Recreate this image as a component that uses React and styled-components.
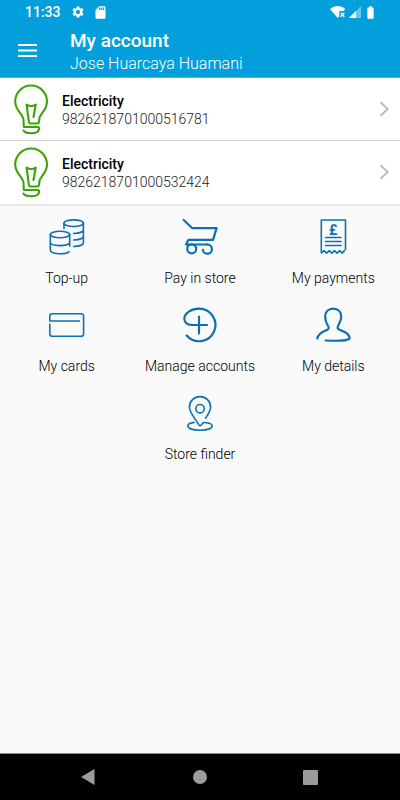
import React from "react";
import styled, { createGlobalStyle } from "styled-components";
import { MdSettings, MdSdCard, MdBatteryFull } from "react-icons/md";

const GlobalStyle = createGlobalStyle`
  * { box-sizing: border-box; }
  body { margin: 0; background: #fafafa; font-family: Roboto, "Liberation Sans", sans-serif; }
  button { font: inherit; border: 0; margin: 0; padding: 0; background: none; cursor: pointer; }
  svg { display: block; flex: none; }
`;

const Screen = styled.div`
  min-height: 100vh;
  display: flex;
  flex-direction: column;
  background: #fafafa;
`;

const Header = styled.header`
  background: #029fdc;
  color: #fff;
  border-bottom: 1px solid #55b5e0;
`;

const StatusBar = styled.div`
  height: 24px;
  padding: 0 22px 0 25px;
  display: flex;
  align-items: center;
  justify-content: space-between;
`;

const StatusGroup = styled.div`
  display: flex;
  align-items: center;
  gap: ${(p) => p.$gap}px;
`;

const Clock = styled.time`
  font-size: 14px;
  font-weight: 500;
  line-height: 24px;
  margin-right: 2px;
`;

const AppBar = styled.div`
  height: 53px;
  padding-left: 15px;
  display: flex;
  align-items: center;
  gap: 31px;
`;

const MenuButton = styled.button`
  width: 24px;
  height: 24px;
  color: #fff;
`;

const Heading = styled.div`
  padding-top: 3px;
`;

const Title = styled.h1`
  margin: 0;
  font-size: 19px;
  line-height: 24px;
  font-weight: 500;
`;

const Subtitle = styled.p`
  margin: 0;
  font-size: 16px;
  line-height: 22px;
  font-weight: 300;
`;

const AccountList = styled.ul`
  list-style: none;
  margin: 0;
  padding: 0 0 1px;
  background: #fff;
  border-bottom: 2px solid #e7e7e7;
`;

const AccountItem = styled.li`
  & + & { border-top: 1px solid #cfcfcf; }
`;

const AccountButton = styled.button`
  width: 100%;
  height: 62px;
  padding: 0 8px 0 13px;
  display: flex;
  align-items: center;
  gap: 13px;
  text-align: left;
`;

const AccountText = styled.span`
  flex: 1;
  display: flex;
  flex-direction: column;
  padding-top: 2px;
`;

const AccountName = styled.span`
  font-size: 14px;
  line-height: 18px;
  font-weight: 500;
  color: #000;
`;

const AccountNumber = styled.span`
  font-size: 14px;
  line-height: 18px;
  font-weight: 300;
  color: #222;
`;

const Actions = styled.main`
  flex: 1;
  display: flex;
  flex-wrap: wrap;
  justify-content: center;
  align-content: flex-start;
`;

const Tile = styled.button`
  width: 33.333%;
  height: 88px;
  display: flex;
  flex-direction: column;
  align-items: center;
  gap: 11px;
  padding-top: 11px;
`;

const TileLabel = styled.span`
  font-size: 14px;
  line-height: 20px;
  font-weight: 300;
  color: #000;
`;

const TileIcon = styled.svg.attrs({
  width: 40,
  height: 40,
  viewBox: "0 0 40 40",
  fill: "none",
  stroke: "#0d70b3",
  strokeLinecap: "round",
  strokeLinejoin: "round",
  "aria-hidden": true,
})`
  stroke-width: ${(p) => (p.$bold ? 2.2 : 1.6)};
`;

const NavBar = styled.nav`
  height: 47px;
  background: #000;
  border-top: 1px solid #888;
  display: flex;
  align-items: center;
  justify-content: space-between;
  padding: 0 77px 0 76px;
`;

const NavButton = styled.button`
  width: 24px;
  height: 24px;
`;

const WifiOff = () => (
  <svg width="17" height="14" viewBox="0 0 17 14" aria-hidden="true">
    <path d="M0 4C4.4-.1 11-.1 15.3 4L13.6 6H9.3v5.4L7.7 13z" fill="#fff" />
    <path d="M10.7 7.7l3.6 4M14.3 7.7l-3.6 4" stroke="#fff" strokeWidth="1.3" />
  </svg>
);

const Signal = () => (
  <svg width="12" height="12" viewBox="0 0 12 12" aria-hidden="true">
    <path d="M0 12L12 0v12z" fill="#67c5ea" />
    <path d="M0 12L7 5v7z" fill="#fff" />
  </svg>
);

const Bulb = () => (
  <svg width="36" height="52" viewBox="0 0 36 52" fill="none" stroke="#3fa109" strokeWidth="2.1" strokeLinecap="round" strokeLinejoin="round" aria-hidden="true">
    <path d="M11 43.7c-.8-2 .2-5.2-.8-8.500C8.900 30.200 2.200 27.200 2.200 18.500a15.900 16 0 0 1 31.800 0C34 27.200 27.500 30.200 26.500 34.700c-.5 2.400.2 5.800-2.200 5.800h-6.800c-1 0-1.500-.5-1.600-1.300L13.600 21.600c3.300 2 6.100 2 9.100 0L20.500 34" />
    <path d="M11 44h13.500c1.400 0 1.800.8 1.500 2.200-.7 3-2.500 4-7.700 4-4.300 0-6.700-.6-7.800-2.700" />
  </svg>
);

const Chevron = () => (
  <svg width="16" height="20" viewBox="0 0 16 20" fill="none" stroke="#bcbcc1" strokeWidth="2" aria-hidden="true">
    <path d="M4.500 3.200l7.200 6.800-7.200 6.800" />
  </svg>
);

const CoinsIcon = () => (
  <TileIcon>
    <ellipse cx="26.700" cy="6.200" rx="9.700" ry="3.300" />
    <path d="M17 6.200v5.300M36.400 6.200v19.600c0 2-4 3.600-9.700 3.700M36.400 12.800c0 2-4 3.600-9.700 3.700M36.400 19.300c0 2-4 3.600-9.700 3.700" />
    <ellipse cx="13" cy="17.500" rx="9.700" ry="3.300" />
    <path d="M3.300 17.500v15.600c0 4.400 16 4.800 18.800 1.400M3.300 25.300c0 4.400 19.400 4.400 19.400 0M22.700 17.500v11.600" />
  </TileIcon>
);

const CartIcon = () => (
  <TileIcon $bold>
    <path d="M3.600 3l8.700 8.200h24.300L33 22.800H8.500L6 27.500h21" />
    <circle cx="11.700" cy="31.800" r="4.500" />
    <path d="M27 27.500a4.600 4.600 0 1 1-4.200 5.300" />
  </TileIcon>
);

const Pound = styled.text`
  font: 700 14px Roboto, sans-serif;
  fill: #0d70b3;
  stroke: none;
`;

const ReceiptIcon = () => (
  <TileIcon>
    <path d="M8.300 35.800V3h24.200v29.500M8.300 35.800l2.800-2.200 2.500 2.500 2.700-2.500 2.500 2.500 2.700-2.500 2.500 2.500 2.700-2.500 2.500 2.500 2.200-2.500" />
    <path d="M12.500 20.500h15.500M12.500 24.500h15.500M12.500 28.500h15.500" />
    <Pound x="16" y="18">£</Pound>
  </TileIcon>
);

const CardIcon = () => (
  <TileIcon>
    <path d="M2.800 16V11a2.300 2.300 0 0 1 2.300-2.300h29.200a2.300 2.300 0 0 1 2.300 2.300v18a2.300 2.300 0 0 1-2.300 2.300H5.100A2.300 2.300 0 0 1 2.800 29v-9.600M2.800 16h29.700" />
  </TileIcon>
);

const ManageIcon = () => (
  <TileIcon $bold>
    <path d="M6.700 30.500A16.300 16.300 0 1 0 19 3.600C11.500 3.600 4.300 8.300 4.300 13.600c0 4 3.300 6.400 7.700 6.400h15M19 11.500v17" />
  </TileIcon>
);

const PersonIcon = () => (
  <TileIcon $bold>
    <path d="M4.300 33.500c1.500-6.800 7.700-7.400 10.500-9 1.700-1 .8-2.700-.4-4.700-1.500-2.500-2.200-5.200-2.200-8 0-5 3.200-8.200 8-8.200s8 3.200 8 8.200c0 5.200-3.600 7.800-3.600 11 0 4 10.500 1.300 12 10.200.2 1.200-2.500 2.200-8.600 2.600-4.300.3-9.600.1-15.300-.1" />
  </TileIcon>
);

const PinIcon = () => (
  <TileIcon>
    <circle cx="20" cy="15.700" r="4.200" />
    <path d="M25.600 25.200c2.800-4.200 5-7.300 5-11.200a10.600 10.400 0 0 0-21.200 0c0 6 6 11.500 9.100 17.300 1 1.800 2.200 1.800 3.200.1.900-1.600 1.400-2.200 3.300-1.900 4.300.5 7.200 1.600 7.200 3.500 0 2.500-5.200 4.200-12.200 4.200S7.900 35.500 7.900 33c0-1.900 2.600-3.100 6.100-3.600" />
  </TileIcon>
);

const accounts = [
  { name: "Electricity", number: "9826218701000516781" },
  { name: "Electricity", number: "9826218701000532424" },
];

const actions = [
  { label: "Top-up", Icon: CoinsIcon },
  { label: "Pay in store", Icon: CartIcon },
  { label: "My payments", Icon: ReceiptIcon },
  { label: "My cards", Icon: CardIcon },
  { label: "Manage accounts", Icon: ManageIcon },
  { label: "My details", Icon: PersonIcon },
  { label: "Store finder", Icon: PinIcon },
];

export default function App() {
  return (
    <Screen>
      <GlobalStyle />
      <Header>
        <StatusBar>
          <StatusGroup $gap={8}>
            <Clock>11:33</Clock>
            <MdSettings size={14} />
            <MdSdCard size={15} />
          </StatusGroup>
          <StatusGroup $gap={2}>
            <WifiOff />
            <Signal />
            <MdBatteryFull size={15} />
          </StatusGroup>
        </StatusBar>
        <AppBar>
          <MenuButton aria-label="Open menu">
            <svg width="24" height="24" viewBox="0 0 24 24" stroke="currentColor" strokeWidth="2" aria-hidden="true">
              <path d="M3 6h19M3 11.500h19M3 17h19" />
            </svg>
          </MenuButton>
          <Heading>
            <Title>My account</Title>
            <Subtitle>Jose Huarcaya Huamani</Subtitle>
          </Heading>
        </AppBar>
      </Header>
      <AccountList>
        {accounts.map((a) => (
          <AccountItem key={a.number}>
            <AccountButton>
              <Bulb />
              <AccountText>
                <AccountName>{a.name}</AccountName>
                <AccountNumber>{a.number}</AccountNumber>
              </AccountText>
              <Chevron />
            </AccountButton>
          </AccountItem>
        ))}
      </AccountList>
      <Actions>
        {actions.map(({ label, Icon }) => (
          <Tile key={label}>
            <Icon />
            <TileLabel>{label}</TileLabel>
          </Tile>
        ))}
      </Actions>
      <NavBar aria-label="System navigation">
        <NavButton aria-label="Back">
          <svg width="24" height="24" viewBox="0 0 24 24" fill="#9b9b9b"><path d="M5 12l13.500-8v16z" /></svg>
        </NavButton>
        <NavButton aria-label="Home">
          <svg width="24" height="24" viewBox="0 0 24 24" fill="#9b9b9b"><circle cx="12" cy="12" r="7" /></svg>
        </NavButton>
        <NavButton aria-label="Recent apps">
          <svg width="24" height="24" viewBox="0 0 24 24" fill="#9b9b9b"><rect x="4" y="5" width="15" height="15" rx="1" /></svg>
        </NavButton>
      </NavBar>
    </Screen>
  );
}
